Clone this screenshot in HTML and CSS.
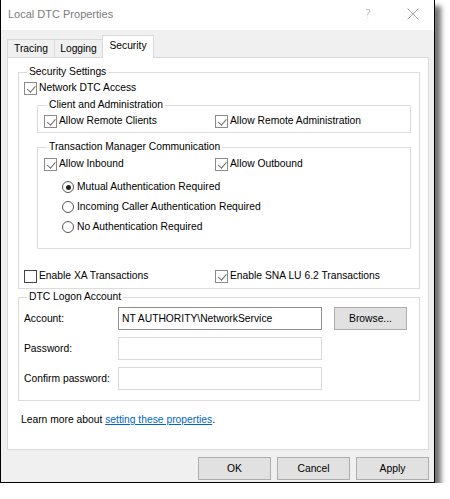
FILE: index.html
```html
<!DOCTYPE html>
<html>
<head>
<meta charset="utf-8">
<link rel="stylesheet" href="styles.css">
</head>
<body>
<div class="window">
  <div class="titlebar">
    <span class="title">Local DTC Properties</span>
    <span class="help">?</span>
    <svg class="close" width="12" height="12" viewBox="0 0 12 12"><path d="M0.5 0.5 L11.5 11.5 M11.5 0.5 L0.5 11.5" stroke="#a0a0a0" stroke-width="0.9" fill="none"/></svg>
  </div>
  <div class="client">
    <div class="tabs">
      <div class="tab t1">Tracing</div>
      <div class="tab t2">Logging</div>
      <div class="tab active">Security</div>
    </div>
    <div class="panel">
      <fieldset class="group main">
        <legend>Security Settings</legend>
        <label class="row"><span class="cb on"></span>Network DTC Access</label>

        <fieldset class="group sub sub1">
          <legend>Client and Administration</legend>
          <div class="pair">
            <label class="row col"><span class="cb on"></span>Allow Remote Clients</label>
            <label class="row"><span class="cb on"></span>Allow Remote Administration</label>
          </div>
        </fieldset>

        <fieldset class="group sub sub2">
          <legend>Transaction Manager Communication</legend>
          <div class="pair">
            <label class="row col"><span class="cb on"></span>Allow Inbound</label>
            <label class="row"><span class="cb on"></span>Allow Outbound</label>
          </div>
          <div class="radios">
            <label class="row radio"><span class="rb on"></span>Mutual Authentication Required</label>
            <label class="row radio"><span class="rb"></span>Incoming Caller Authentication Required</label>
            <label class="row radio"><span class="rb"></span>No Authentication Required</label>
          </div>
        </fieldset>

        <div class="pair xa">
          <label class="row col wide"><span class="cb"></span>Enable XA Transactions</label>
          <label class="row"><span class="cb on"></span>Enable SNA LU 6.2 Transactions</label>
        </div>
      </fieldset>

      <fieldset class="group main logon">
        <legend>DTC Logon Account</legend>
        <div class="field">
          <span class="flabel">Account:</span>
          <div class="input active-input">NT AUTHORITY\NetworkService</div>
          <button class="btn browse">Browse...</button>
        </div>
        <div class="field">
          <span class="flabel">Password:</span>
          <div class="input"></div>
        </div>
        <div class="field">
          <span class="flabel">Confirm password:</span>
          <div class="input"></div>
        </div>
      </fieldset>

      <p class="learn">Learn more about <a href="#">setting these properties</a>.</p>
    </div>
    <div class="buttons">
      <button class="btn">OK</button>
      <button class="btn">Cancel</button>
      <button class="btn">Apply</button>
    </div>
  </div>
</div>
</body>
</html>
```

FILE: styles.css
```css
* { box-sizing: border-box; }

html, body {
  margin: 0;
  background: #ffffff;
}

body {
  font-family: "Liberation Sans", Arial, sans-serif;
  font-size: 10.3px;
  color: #000;
}

.window {
  width: 435px;
  height: 483px;
  border: 1px solid #000;
  border-top: none;
  background: #f0f0f0;
  box-shadow: 6px 6px 5px rgba(0, 0, 0, 0.55);
  display: flex;
  flex-direction: column;
}

/* title bar */
.titlebar {
  height: 30px;
  background: #fff;
  display: flex;
  align-items: center;
  padding-left: 7px;
}

.title {
  font-size: 11px;
  color: #7c7c7c;
  flex: 1;
  margin-top: -2px;
}

.help {
  font-family: "DejaVu Sans", sans-serif;
  font-size: 12px;
  font-weight: 200;
  color: #9a9a9a;
  margin-right: 36px;
  margin-top: -2px;
}

.close {
  margin-right: 15px;
  margin-top: -3px;
}

/* client area */
.client {
  flex: 1;
  padding: 0 5px 0 6px;
  display: flex;
  flex-direction: column;
}

.tabs {
  margin-top: 5px;
  height: 22px;
  display: flex;
  align-items: flex-end;
  position: relative;
  z-index: 1;
}

.tab {
  height: 18px;
  line-height: 17px;
  text-align: center;
  border: 1px solid #d9d9d9;
  border-bottom: none;
  background: #f0f0f0;
}

.t1 { width: 48px; }
.t2 { width: 48px; border-left: none; }

.tab.active {
  height: 23px;
  width: 52px;
  margin-left: -1px;
  margin-bottom: -1px;
  line-height: 19px;
  background: #fff;
}

.panel {
  height: 393px;
  background: #fff;
  border: 1px solid #d9d9d9;
  padding: 0 7px 0 10px;
}

/* group boxes */
.group {
  margin: 0;
  padding: 0 0 0 5px;
  border: 1px solid #dcdcdc;
  min-width: 0;
}

.group legend {
  margin-left: 3px;
  padding: 0 2px;
  line-height: 14px;
  height: 14px;
}

.main {
  width: 402px;
  margin-top: 7px;
  padding-bottom: 5px;
}

.row {
  display: flex;
  align-items: center;
  height: 14px;
  line-height: 14px;
  white-space: nowrap;
}

.main > .row { margin-top: 2px; }

.sub {
  width: 374px;
  margin-left: 13px;
  padding-left: 6px;
}

.sub1 {
  margin-top: 3px;
  padding-bottom: 4px;
}

.sub2 {
  margin-top: 7px;
  padding-bottom: 14px;
}

.pair {
  display: flex;
  margin-top: 2px;
}

.sub2 .pair { margin-top: 3px; }

.col { width: 171px; }
.wide { width: 191px; }

.radios { padding-left: 18px; }
.radio { margin-top: 6px; }
.radios .radio:first-child { margin-top: 9px; }

.xa { margin-top: 20px; }

/* checkbox */
.cb {
  width: 13px;
  height: 13px;
  border: 1px solid #444;
  margin-right: 2px;
  flex: none;
  position: relative;
  background: #fff;
}

.cb.on {
  border-color: #8a8a8a;
}

.cb.on::after {
  content: "";
  position: absolute;
  left: 3.5px;
  top: 1.5px;
  width: 3.5px;
  height: 6.5px;
  border-right: 1px solid #6a6a6a;
  border-bottom: 1px solid #6a6a6a;
  transform: rotate(40deg);
}

/* radio */
.rb {
  width: 12px;
  height: 12px;
  border: 1px solid #555;
  border-radius: 50%;
  margin-right: 3px;
  flex: none;
  position: relative;
  background: #fff;
}

.rb.on::after {
  content: "";
  position: absolute;
  left: 2.5px;
  top: 2.5px;
  width: 5px;
  height: 5px;
  border-radius: 50%;
  background: #222;
}

/* logon account */
.logon {
  margin-top: 1px;
  padding-bottom: 10px;
  padding-left: 5px;
}

.field {
  display: flex;
  align-items: center;
  height: 23px;
  margin-top: 7px;
}

.logon legend + .field { margin-top: 3px; }

.flabel { width: 94px; }

.input {
  width: 204px;
  height: 23px;
  border: 1px solid #dadada;
  background: #fff;
  padding-left: 3px;
  line-height: 21px;
}

.input.active-input { border-color: #8f8f8f; }

.btn {
  font: inherit;
  color: #000;
  width: 73px;
  height: 23px;
  background: #e1e1e1;
  border: 1px solid #adadad;
  padding: 0;
}

.browse { margin-left: 12px; }

.learn {
  margin: 12px 0 0 3px;
  line-height: 14px;
}

.learn a {
  color: #0066cc;
  text-decoration: underline;
}

/* dialog buttons */
.buttons {
  display: flex;
  justify-content: flex-end;
  gap: 6px;
  margin-top: 7px;
  padding-right: 0;
}
```
